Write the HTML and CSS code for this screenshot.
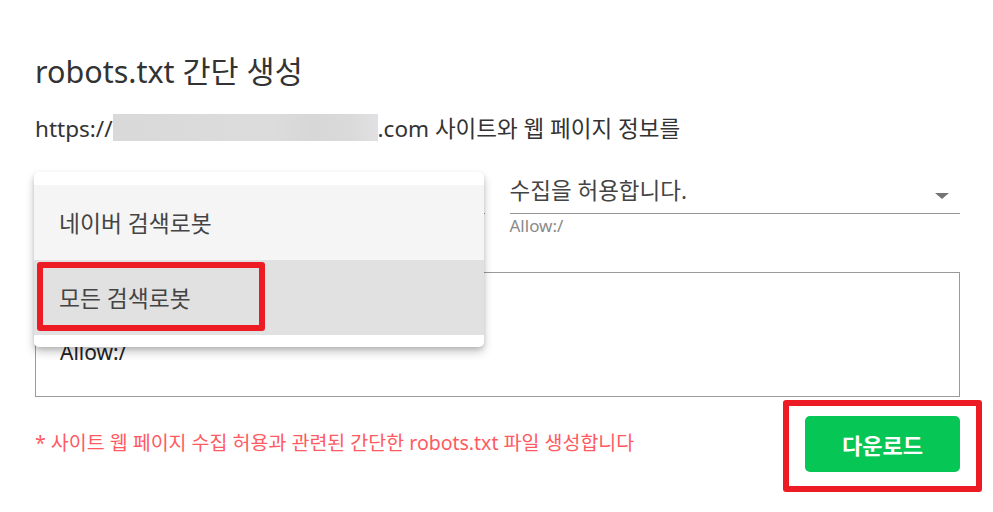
FILE: index.html
```html
<!DOCTYPE html>
<html lang="ko">
<head>
<meta charset="utf-8">
<title>robots.txt 간단 생성</title>
<link rel="stylesheet" href="styles.css">
</head>
<body>
<main class="page">
  <h1 class="title">robots.txt 간단 생성</h1>
  <p class="url">https://<span class="blur"></span>.com 사이트와 웹 페이지 정보를</p>

  <div class="row">
    <div class="field left">
      <div class="select-line"></div>
      <ul class="menu">
        <li class="item">네이버 검색로봇</li>
        <li class="item active">모든 검색로봇</li>
        <span class="mark mark-item"></span>
      </ul>
    </div>
    <div class="field right">
      <div class="select-line">
        <span class="value">수집을 허용합니다.</span>
        <span class="arrow"></span>
      </div>
      <div class="hint">Allow:/</div>
    </div>
  </div>

  <div class="output">Allow:/</div>

  <div class="footer">
    <p class="note">* 사이트 웹 페이지 수집 허용과 관련된 간단한 robots.txt 파일 생성합니다</p>
    <div class="btn-wrap">
      <button class="download">다운로드</button>
      <span class="mark mark-btn"></span>
    </div>
  </div>
</main>
</body>
</html>
```
FILE: styles.css
```css
* { box-sizing: border-box; }
html, body { margin: 0; padding: 0; background: #fff; }
body {
  font-family: "Noto Sans", "Noto Sans CJK KR", sans-serif;
  color: #333;
  min-height: 512px;
}
.page {
  width: 993px;
  padding: 51px 33px 40px 35px;
}
.title {
  margin: 0;
  font-size: 30.5px;
  font-weight: 400;
  line-height: 40px;
  color: #333;
}
.url {
  margin: 23px 0 0;
  font-size: 22.5px;
  line-height: 30px;
  height: 30px;
  color: #333;
  display: flex;
  align-items: center;
}
.blur {
  display: inline-block;
  width: 265px;
  height: 27px;
  background: linear-gradient(90deg, #d9d9d9 0%, #dcdcdc 60%, #d7d7d7 75%, #dadada 90%, #e1e1e4 100%);
  margin: -3px 0 0 0;
}
.row {
  display: flex;
  gap: 25px;
  margin-top: 27px;
}
.field { position: relative; }
.left { width: 450px; }
.right { width: 451px; }
.select-line {
  height: 43px;
  border-bottom: 1px solid #949494;
  display: flex;
  align-items: center;
  justify-content: space-between;
  padding: 0 11px 6px 0;
}
.value {
  font-size: 22.5px;
  color: #444;
}
.arrow {
  width: 0;
  height: 0;
  border-left: 7.5px solid transparent;
  border-right: 7.5px solid transparent;
  border-top: 6px solid #757575;
  margin-top: 13px;
}
.hint {
  font-size: 17px;
  color: #8a8a8a;
  margin-top: 1px;
  line-height: 22px;
}
.menu {
  position: absolute;
  left: -1px;
  top: 1px;
  width: 450px;
  margin: 0;
  padding: 13px 0 12px;
  list-style: none;
  background: #fff;
  border-radius: 5px;
  box-shadow: 0 5px 10px rgba(0,0,0,0.22), 0 2px 4px rgba(0,0,0,0.12);
  z-index: 5;
}
.item {
  height: 75px;
  display: flex;
  align-items: center;
  padding-left: 25px;
  font-size: 22.8px;
  color: #444;
  background: #f5f5f5;
}
.item.active { background: #e1e1e1; }
.mark {
  position: absolute;
  border: 6px solid #ed1c24;
  border-radius: 3px;
  pointer-events: none;
}
.mark-item {
  left: 3px;
  top: 90px;
  width: 228px;
  height: 69px;
}
.output {
  margin-top: 35px;
  height: 125px;
  border: 1px solid #9a9a9a;
  padding: 59px 24px 0;
  font-size: 21px;
  line-height: 40px;
  color: #222;
}
.footer {
  display: flex;
  justify-content: space-between;
  align-items: center;
  margin-top: 19px;
}
.note {
  margin: 0 0 5px;
  font-size: 19.5px;
  color: #ff5a5f;
}
.btn-wrap {
  position: relative;
  display: flex;
}
.download {
  width: 155px;
  height: 56px;
  border: 0;
  border-radius: 5px;
  background: #06c655;
  color: #fff;
  font-family: "Noto Sans CJK KR", "Noto Sans", sans-serif;
  font-size: 22px;
  font-weight: 700;
}
.mark-btn {
  left: -22px;
  top: -16px;
  width: 199px;
  height: 92px;
}
```
